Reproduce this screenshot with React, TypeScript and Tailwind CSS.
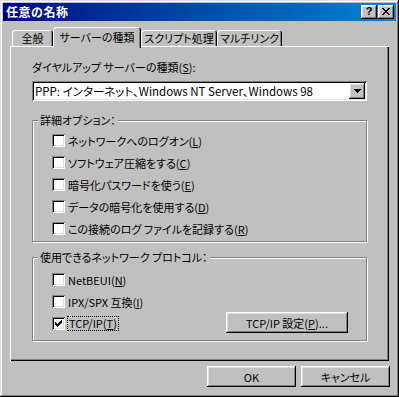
import React from "react";

// Win98 bevels
const raised =
  "shadow-[inset_-1px_-1px_#000,inset_1px_1px_#fff,inset_-2px_-2px_#808080,inset_2px_2px_#dfdfdf]";
const sunken =
  "shadow-[inset_1px_1px_#808080,inset_-1px_-1px_#fff,inset_2px_2px_#000,inset_-2px_-2px_#dfdfdf]";

const Key = ({ k }: { k: string }) => <span className="underline underline-offset-[1px]">{k}</span>;

function CheckBox({ checked }: { checked?: boolean }) {
  return (
    <span className={"w-[13px] h-[13px] bg-white shrink-0 flex items-center justify-center " + sunken}>
      {checked && (
        <svg width="7" height="7" viewBox="0 0 7 7" shapeRendering="crispEdges">
          <path
            d="M0 2h1v3H0zM1 3h1v3H1zM2 4h1v3H2zM3 3h1v3H3zM4 2h1v3H4zM5 1h1v3H5zM6 0h1v3H6z"
            fill="#000"
          />
        </svg>
      )}
    </span>
  );
}

function Option({ label, checked, focus }: { label: React.ReactNode; checked?: boolean; focus?: boolean }) {
  return (
    <div className="flex items-center h-[13px] gap-[3px]">
      <CheckBox checked={checked} />
      {focus ? (
        <span className="border border-dotted border-black px-[1px] leading-[13px] -ml-[1px]">{label}</span>
      ) : (
        <span className="leading-[16px]">{label}</span>
      )}
    </div>
  );
}

function Group({ title, className, children }: { title: string; className: string; children: React.ReactNode }) {
  return (
    <div className={"relative border border-[#808080] shadow-[inset_1px_1px_#fff,1px_1px_#fff] " + className}>
      <span className="absolute left-[5px] top-[-9px] px-[2px] bg-[#c0c0c0] leading-[16px]">{title}</span>
      {children}
    </div>
  );
}

function Tab({ label, active, w }: { label: string; active?: boolean; w: string }) {
  return (
    <div
      className={
        "flex justify-center rounded-t-[3px] bg-[#c0c0c0] shadow-[inset_1px_1px_#fff,inset_-1px_0_#000,inset_-2px_0_#808080] " +
        w +
        (active ? " h-[21px] -mb-[2px] relative z-10 pt-[3px]" : " h-[16px] pt-[1px]")
      }
    >
      <span className="leading-[14px]">{label}</span>
    </div>
  );
}

function Button({ children, className }: { children: React.ReactNode; className: string }) {
  return (
    <div className={"bg-[#c0c0c0] flex items-center justify-center " + raised + " " + className}>{children}</div>
  );
}

export default function App() {
  return (
    <div
      className={
        "w-[399px] h-[397px] bg-[#c0c0c0] p-[3px] flex flex-col text-[11px] text-black whitespace-nowrap font-['Noto_Sans_CJK_JP',sans-serif] [font-feature-settings:'palt'] " +
        "shadow-[inset_-1px_-1px_#000,inset_1px_1px_#dfdfdf,inset_-2px_-2px_#808080,inset_2px_2px_#fff]"
      }
    >
      {/* title bar */}
      <div className="h-[18px] bg-linear-to-r from-[#000080] to-[#1084d0] flex items-center pl-[3px] pr-[2px]">
        <span className="text-white font-bold text-[12px] leading-[16px] tracking-[0.5px] [font-feature-settings:normal]">任意の名称</span>
        <div className="ml-auto flex gap-[1px]">
          <Button className="w-[16px] h-[14px]">
            <span className="font-['Liberation_Sans',sans-serif] font-bold text-[11px] leading-[11px] mt-[-1px]">?</span>
          </Button>
          <Button className="w-[16px] h-[14px]">
            <svg width="8" height="7" viewBox="0 0 8 7" shapeRendering="crispEdges" className="mt-[-1px]">
              <path
                d="M0 0h2v1H0zM6 0h2v1H6zM1 1h2v1H1zM5 1h2v1H5zM2 2h4v1H2zM3 3h2v1H3zM2 4h4v1H2zM1 5h2v1H1zM5 5h2v1H5zM0 6h2v1H0zM6 6h2v1H6z"
                fill="#000"
              />
            </svg>
          </Button>
        </div>
      </div>

      <div className="mx-[7px] mt-[7px] flex flex-col">
        {/* tabs */}
        <div className="flex items-end h-[18px] pl-[2px]">
          <Tab label="全般" w="w-[41px]" />
          <Tab label="サーバーの種類" w="w-[88px]" active />
          <Tab label="スクリプト処理" w="w-[76px]" />
          <Tab label="マルチリンク" w="w-[65px]" />
        </div>

        {/* panel */}
        <div className="h-[315px] flex flex-col px-[22px] pt-[13px] shadow-[inset_1px_1px_#fff,inset_-1px_-1px_#000,inset_-2px_-2px_#808080]">
          <div className="leading-[16px]">
            ダイヤルアップ サーバーの種類(<Key k="S" />):
          </div>
          <div className={"mt-[6px] h-[20px] bg-white flex items-center pl-[3px] pr-[2px] " + sunken}>
            <span className="leading-[16px] text-[11.5px]">PPP: インターネット、Windows NT Server、Windows 98</span>
            <Button className="ml-auto w-[16px] h-[16px]">
              <svg width="7" height="4" viewBox="0 0 7 4" shapeRendering="crispEdges">
                <path d="M0 0h7v1H0zM1 1h5v1H1zM2 2h3v1H2zM3 3h1v1H3z" fill="#000" />
              </svg>
            </Button>
          </div>

          <Group title="詳細オプション：" className="mt-[19px] h-[122px] pl-[19px] pt-[13px]">
            <div className="flex flex-col gap-[9px]">
              <Option label={<>ネットワークへのログオン(<Key k="L" />)</>} />
              <Option label={<>ソフトウェア圧縮をする(<Key k="C" />)</>} />
              <Option label={<>暗号化パスワードを使う(<Key k="E" />)</>} />
              <Option label={<>データの暗号化を使用する(<Key k="D" />)</>} />
              <Option label={<>この接続のログ ファイルを記録する(<Key k="R" />)</>} />
            </div>
          </Group>

          <Group title="使用できるネットワーク プロトコル：" className="mt-[15px] h-[84px] pl-[19px] pt-[15px] flex">
            <div className="flex flex-col gap-[9px]">
              <Option label={<>NetBEUI(<Key k="N" />)</>} />
              <Option label={<>IPX/SPX 互換(<Key k="I" />)</>} />
              <Option label={<>TCP/IP(<Key k="T" />)</>} checked focus />
            </div>
            <Button className="ml-auto self-end mb-[7px] mr-[18px] w-[122px] h-[21px]">
              <span className="leading-[16px]">
                TCP/IP 設定(<Key k="P" />)...
              </span>
            </Button>
          </Group>
        </div>
      </div>

      {/* dialog buttons */}
      <div className="flex justify-end gap-[5px] mt-[5px] mr-[6px]">
        <Button className="w-[89px] h-[21px]">
          <span className="leading-[16px]">OK</span>
        </Button>
        <Button className="w-[89px] h-[21px]">
          <span className="leading-[16px]">キャンセル</span>
        </Button>
      </div>
    </div>
  );
}
